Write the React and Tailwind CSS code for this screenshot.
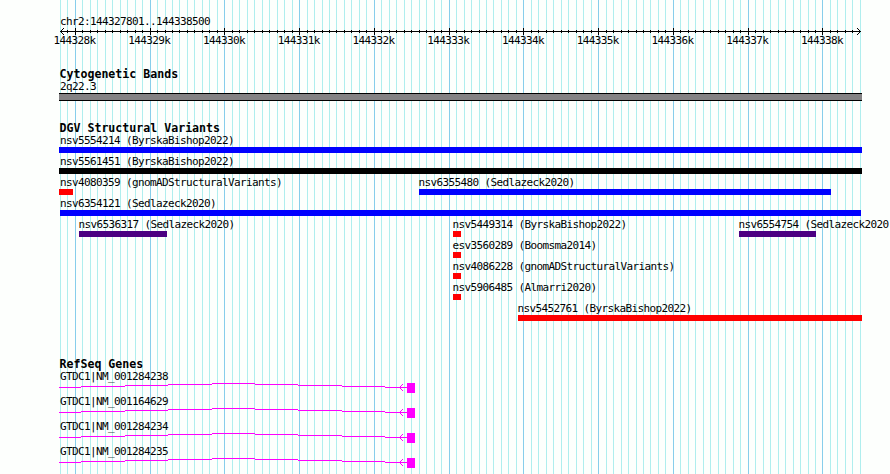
import React from 'react';

const LABEL = "block whitespace-pre font-['DejaVu_Sans_Mono','Liberation_Mono',monospace] text-[11px] tracking-[-0.622px] text-black";
const ticks = Array.from({ length: 108 }, (_, n) => n - 2).map((i) => ({
  x: Math.floor(75.3 + 7.4766 * i),
  major: i % 10 === 0,
}));

function GridLines() {
  return (
    <svg className="absolute inset-0" width="890" height="474" shapeRendering="crispEdges">
      {ticks.map((t) => (
        <rect key={t.x} x={t.x} y="0" width="1" height="474" fill={t.major ? '#87ceeb' : '#afeeee'} />
      ))}
    </svg>
  );
}

function Ruler() {
  return (
    <svg className="block" width="890" height="7" shapeRendering="crispEdges">
      <rect x="60" y="3" width="801" height="1" />
      {ticks.slice(1, -1).map((t) => (
        <rect key={t.x} x={t.x} y={t.major ? 0 : 2} width="1" height={t.major ? 7 : 3} />
      ))}
      <path d="M61 2h1v1h-1zM62 1h1v1h-1zM63 0h1v1h-1zM61 4h1v1h-1zM62 5h1v1h-1zM63 6h1v1h-1z" />
      <path d="M859 2h1v1h-1zM858 1h1v1h-1zM857 0h1v1h-1zM859 4h1v1h-1zM858 5h1v1h-1zM857 6h1v1h-1z" />
    </svg>
  );
}

function Heading({ children }) {
  return (
    <h2 className="h-[13px] whitespace-pre pl-[59.5px] font-['DejaVu_Sans_Mono','Liberation_Mono',monospace] text-[11.6px] font-bold leading-[11px] text-black">
      {children}
    </h2>
  );
}

function Feature({ name, margin, width, color, inset = '-ml-[0.5px]' }) {
  return (
    <div className={`flex-none ${margin} ${width}`}>
      <span className={`${LABEL} ${inset} h-[15px] leading-[17px]`}>{name}</span>
      <div className={`h-[6px] ${color}`} />
    </div>
  );
}

const rows = [
  [{ name: 'nsv5554214 (ByrskaBishop2022)', margin: 'ml-[59px]', width: 'w-[803px]', color: 'bg-[#0000ff]', inset: 'ml-px' }],
  [{ name: 'nsv5561451 (ByrskaBishop2022)', margin: 'ml-[59px]', width: 'w-[803px]', color: 'bg-black', inset: 'ml-px' }],
  [
    { name: 'nsv4080359 (gnomADStructuralVariants)', margin: 'ml-[59px]', width: 'w-[14px]', color: 'bg-[#ff0000]', inset: 'ml-px' },
    { name: 'nsv6355480 (Sedlazeck2020)', margin: 'ml-[346px]', width: 'w-[412px]', color: 'bg-[#0000ff]' },
  ],
  [{ name: 'nsv6354121 (Sedlazeck2020)', margin: 'ml-[60px]', width: 'w-[801px]', color: 'bg-[#0000ff]', inset: 'ml-0' }],
  [
    { name: 'nsv6536317 (Sedlazeck2020)', margin: 'ml-[79px]', width: 'w-[88px]', color: 'bg-[#4b0082]' },
    { name: 'nsv5449314 (ByrskaBishop2022)', margin: 'ml-[286px]', width: 'w-[8px]', color: 'bg-[#ff0000]' },
    { name: 'nsv6554754 (Sedlazeck2020)', margin: 'ml-[278px]', width: 'w-[77px]', color: 'bg-[#4b0082]' },
  ],
  [{ name: 'esv3560289 (Boomsma2014)', margin: 'ml-[453px]', width: 'w-[8px]', color: 'bg-[#ff0000]' }],
  [{ name: 'nsv4086228 (gnomADStructuralVariants)', margin: 'ml-[453px]', width: 'w-[8px]', color: 'bg-[#ff0000]' }],
  [{ name: 'nsv5906485 (Almarri2020)', margin: 'ml-[453px]', width: 'w-[8px]', color: 'bg-[#ff0000]' }],
  [{ name: 'nsv5452761 (ByrskaBishop2022)', margin: 'ml-[518px]', width: 'w-[344px]', color: 'bg-[#ff0000]' }],
];

const intron = [
  [59, 22, 4], [81, 44, 3], [125, 43, 2], [168, 44, 1], [212, 43, 0],
  [255, 43, 1], [298, 44, 2], [342, 43, 3], [385, 22, 4],
];

function Gene({ name }) {
  return (
    <div className="h-[25px]">
      <span className={`${LABEL} h-[15px] pl-[60px] leading-[17px]`}>{name}</span>
      <svg className="block" width="890" height="10" fill="#ff00ff" shapeRendering="crispEdges">
        {intron.map(([x, w, y]) => (
          <rect key={x} x={x} y={y} width={w} height="1" />
        ))}
        <path d="M400 3h1v1h-1zM401 2h1v1h-1zM402 1h1v1h-1zM400 5h1v1h-1zM401 6h1v1h-1zM402 7h1v1h-1z" />
        <rect x="407" y="0" width="8" height="10" />
      </svg>
    </div>
  );
}

export default function App() {
  return (
    <main className="relative h-[474px] w-[890px] overflow-hidden bg-[#fdfffd]">
      <GridLines />
      <div className="relative flex flex-col">
        <header className="flex h-[69px] flex-col pt-[13px]">
          <span className={`${LABEL} h-[15px] pl-[60px] leading-[17px]`}>chr2:144327801..144338500</span>
          <Ruler />
          <div className="flex pl-[37px]">
            {[28, 29, 30, 31, 32, 33, 34, 35, 36, 37, 38].map((n) => (
              <span key={n} className={`${LABEL} w-[74.77px] flex-none text-center leading-[11px]`}>{`1443${n}k`}</span>
            ))}
          </div>
        </header>
        <section className="h-[54px]">
          <Heading>Cytogenetic Bands</Heading>
          <span className={`${LABEL} h-[11px] pl-[60px] leading-[9px]`}>2q22.3</span>
          <div className="ml-[59px] h-[8px] w-[803px] border-y border-black bg-[#848284]" />
        </section>
        <section className="h-[236px]">
          <Heading>DGV Structural Variants</Heading>
          <div className="-mt-[4px]">
            {rows.map((row) => (
              <div key={row[0].name} className="flex h-[21px]">
                {row.map((f) => (
                  <Feature key={f.name} {...f} />
                ))}
              </div>
            ))}
          </div>
        </section>
        <section>
          <Heading>RefSeq Genes</Heading>
          <div className="-mt-[4px]">
            {['GTDC1|NM_001284238', 'GTDC1|NM_001164629', 'GTDC1|NM_001284234', 'GTDC1|NM_001284235'].map((g) => (
              <Gene key={g} name={g} />
            ))}
          </div>
        </section>
      </div>
    </main>
  );
}
